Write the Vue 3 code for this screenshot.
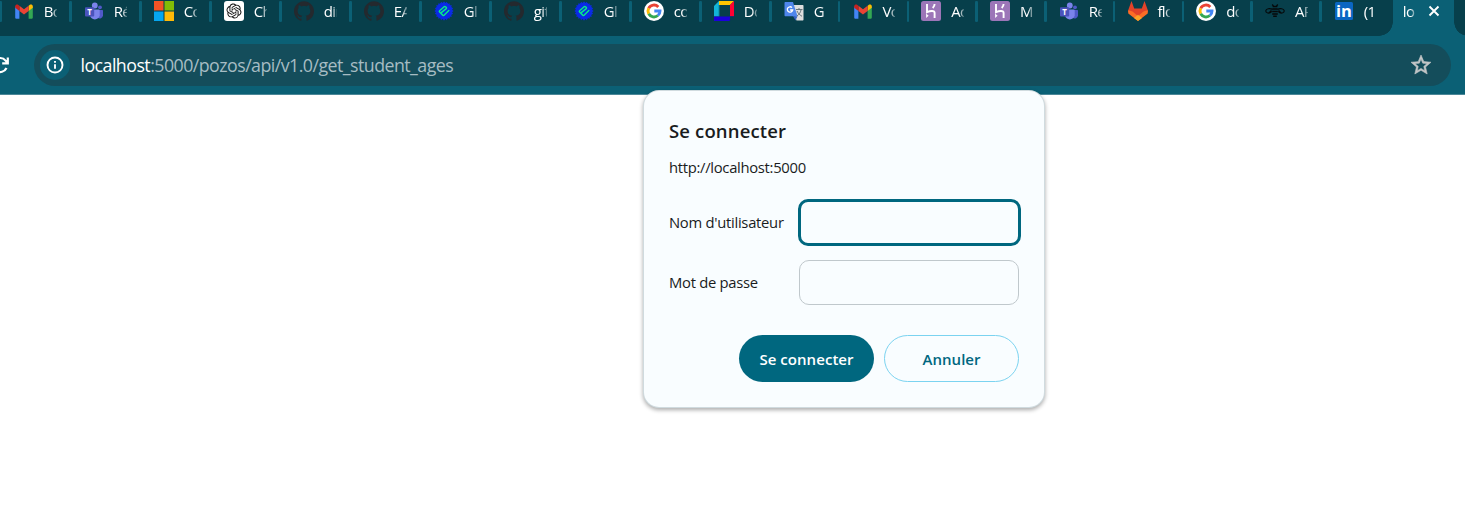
<script setup>
const tabs = [
  { icon: 'gmail', title: 'Bo' },
  { icon: 'teams', title: 'Ré' },
  { icon: 'microsoft', title: 'Co' },
  { icon: 'openai', title: 'Ch' },
  { icon: 'github', title: 'dir' },
  { icon: 'github', title: 'EA' },
  { icon: 'eazy', title: 'Gl' },
  { icon: 'github', title: 'git' },
  { icon: 'eazy', title: 'Gl' },
  { icon: 'google', title: 'co' },
  { icon: 'cube', title: 'Do' },
  { icon: 'translate', title: 'G', narrow: true },
  { icon: 'gmail', title: 'Vo', narrow: true },
  { icon: 'heroku', title: 'Ac', narrow: true },
  { icon: 'heroku', title: 'M', narrow: true },
  { icon: 'teams', title: 'Re', narrow: true },
  { icon: 'gitlab', title: 'flo', narrow: true },
  { icon: 'google', title: 'do', narrow: true },
  { icon: 'bee', title: 'AP', narrow: true },
  { icon: 'linkedin', title: '(1', narrow: true },
]
const teeth = Array.from({ length: 20 }, (_, i) => i * 18)
</script>

<template>
  <div class="window">
    <div class="strip">
      <div v-for="(tab, i) in tabs" :key="i" class="tab" :class="{ narrow: tab.narrow }">
        <svg class="icon" viewBox="0 0 20 20">
          <g v-if="tab.icon === 'gmail'">
            <path d="M1.2 5.2v11.2c0 .9.6 1.4 1.3 1.4h2.900V9z" fill="#4285f4" />
            <path d="M18.800 5.200v11.200c0 .9-.6 1.400-1.300 1.400h-2.900V9z" fill="#34a853" />
            <path d="M14.600 4.700V10l4.200-3.200V5.600c0-2-2-2.400-3.200-1.600z" fill="#fbbc04" />
            <path d="M5.400 10V4.700L10 8.200l4.600-3.500V10L10 13.500z" fill="#ea4335" />
            <path d="M1.200 5.600v1.200L5.400 10V4.700L4.400 4C3.200 3.200 1.200 3.600 1.200 5.600z" fill="#c5221f" />
          </g>
          <g v-else-if="tab.icon === 'teams'">
            <circle cx="16" cy="6.300" r="1.900" fill="#5059c9" />
            <path d="M13 9h5c.6 0 1 .4 1 1v4.200a3.200 3.200 0 0 1-5.500 2.200z" fill="#5059c9" />
            <circle cx="10.800" cy="4.500" r="2.900" fill="#7b83eb" />
            <path d="M6 8.500h8.800c.5 0 .9.400.9.900v5.200a5 5 0 0 1-9.700 0z" fill="#7b83eb" />
            <rect x="1" y="6.300" width="9.200" height="9.200" rx=".9" fill="#4b53bc" />
            <text x="5.600" y="13.800" class="mark" font-size="8" text-anchor="middle">T</text>
          </g>
          <g v-else-if="tab.icon === 'microsoft'">
            <path d="M0 0h9.500v9.500H0z" fill="#f35325" />
            <path d="M10.500 0H20v9.500h-9.500z" fill="#81bc06" />
            <path d="M0 10.500h9.500V20H0z" fill="#05a6f0" />
            <path d="M10.500 10.500H20V20h-9.500z" fill="#ffba08" />
          </g>
          <g v-else-if="tab.icon === 'openai'">
            <rect width="20" height="20" rx="3" fill="#fff" />
            <path transform="translate(2.500 2.500) scale(.625)" fill="#111" d="M22.2819 9.8211a5.9847 5.9847 0 0 0-.5157-4.9108 6.0462 6.0462 0 0 0-6.5098-2.9A6.0651 6.0651 0 0 0 4.9807 4.1818a5.9847 5.9847 0 0 0-3.9977 2.9 6.0462 6.0462 0 0 0 .7427 7.0966 5.98 5.98 0 0 0 .511 4.9107 6.051 6.051 0 0 0 6.5146 2.9001A5.9847 5.9847 0 0 0 13.2599 24a6.0557 6.0557 0 0 0 5.7718-4.2058 5.9894 5.9894 0 0 0 3.9977-2.9001 6.0557 6.0557 0 0 0-.7475-7.0729zm-9.022 12.6081a4.4755 4.4755 0 0 1-2.8764-1.0408l.1419-.0804 4.7783-2.7582a.7948.7948 0 0 0 .3927-.6813v-6.7369l2.02 1.1686a.071.071 0 0 1 .038.052v5.5826a4.504 4.504 0 0 1-4.4945 4.4944zm-9.6607-4.1254a4.4708 4.4708 0 0 1-.5346-3.0137l.142.0852 4.783 2.7582a.7712.7712 0 0 0 .7806 0l5.8428-3.3685v2.3324a.0804.0804 0 0 1-.0332.0615L9.74 19.9502a4.4992 4.4992 0 0 1-6.1408-1.6464zM2.3408 7.8956a4.485 4.485 0 0 1 2.3655-1.9728V11.6a.7664.7664 0 0 0 .3879.6765l5.8144 3.3543-2.0201 1.1685a.0757.0757 0 0 1-.071 0l-4.8303-2.7865A4.504 4.504 0 0 1 2.3408 7.872zm16.5963 3.8558L13.1038 8.364 15.1192 7.2a.0757.0757 0 0 1 .071 0l4.8303 2.7913a4.4944 4.4944 0 0 1-.6765 8.1042v-5.6772a.79.79 0 0 0-.407-.667zm2.0107-3.0231l-.142-.0852-4.7735-2.7818a.7759.7759 0 0 0-.7854 0L9.409 9.2297V6.8974a.0662.0662 0 0 1 .0284-.0615l4.8303-2.7866a4.4992 4.4992 0 0 1 6.6802 4.66zM8.3065 12.863l-2.02-1.1638a.0804.0804 0 0 1-.038-.0567V6.0742a4.4992 4.4992 0 0 1 7.3757-3.4537l-.142.0805L8.704 5.459a.7948.7948 0 0 0-.3927.6813zm1.0976-2.3654l2.602-1.4998 2.6069 1.4998v2.9994l-2.5974 1.4997-2.6067-1.4997Z" />
          </g>
          <path v-else-if="tab.icon === 'github'" transform="scale(.8333)" fill="#24292e" d="M12 .297c-6.630 0-12 5.373-12 12 0 5.303 3.438 9.800 8.205 11.385.6.113.82-.258.82-.577 0-.285-.01-1.040-.015-2.040-3.338.724-4.042-1.610-4.042-1.610C4.422 18.070 3.633 17.700 3.633 17.700c-1.087-.744.084-.729.084-.729 1.205.084 1.838 1.236 1.838 1.236 1.070 1.835 2.809 1.305 3.495.998.108-.776.417-1.305.76-1.605-2.665-.3-5.466-1.332-5.466-5.930 0-1.310.465-2.380 1.235-3.220-.135-.303-.54-1.523.105-3.176 0 0 1.005-.322 3.300 1.230.96-.267 1.980-.399 3-.405 1.020.006 2.040.138 3 .405 2.280-1.552 3.285-1.230 3.285-1.230.645 1.653.24 2.873.12 3.176.765.84 1.230 1.910 1.230 3.220 0 4.610-2.805 5.625-5.475 5.920.42.36.81 1.096.81 2.220 0 1.606-.015 2.896-.015 3.286 0 .315.21.69.825.57C20.565 22.092 24 17.592 24 12.297c0-6.627-5.373-12-12-12" />
          <g v-else-if="tab.icon === 'eazy'">
            <circle cx="10" cy="10" r="8.500" fill="#0b2be6" />
            <path v-for="a in teeth" :key="a" d="M8.700 2.500 10 .3l1.300 2.200z" fill="#0b2be6" :transform="`rotate(${a} 10 10)`" />
            <path d="M7.600 11.300 12.300 7.600c.8-.9-1.300-2.700-2.200-1.900L5.600 9.700c-.5.500-.4.900 0 1.300l3.200 3.100c.6.500 1 .4 1.500 0l4.500-4.600" fill="none" stroke="#08ea8a" stroke-width="1.500" stroke-linecap="round" stroke-linejoin="round" />
          </g>
          <g v-else-if="tab.icon === 'google'">
            <circle cx="10" cy="10" r="10" fill="#fff" />
            <g fill="none" stroke-width="2.900">
              <path d="M14.300 5.900A6 6 0 0 0 4.700 7.200" stroke="#ea4335" />
              <path d="M4.700 7.200a6 6 0 0 0 0 5.600" stroke="#fbbc05" />
              <path d="M4.700 12.800a6 6 0 0 0 9.200 1.700" stroke="#34a853" />
              <path d="M13.900 14.500A6 6 0 0 0 16 10h-5.700" stroke="#4285f4" />
            </g>
          </g>
          <g v-else-if="tab.icon === 'cube'">
            <path d="M5 0h15l-4 4H5z" fill="#ffc400" />
            <path d="M20 0v15.500h-4V4z" fill="#ff0032" />
            <path d="M5 0v15.500H0V5z" fill="#12b5d8" />
            <path d="M5 4v11.500" stroke="#0b8ba6" />
            <path d="M0 15.500h20L15.500 20H0z" fill="#1b00dc" />
            <path d="M16 15.500h4v.2L15.800 20z" fill="#073f4b" />
          </g>
          <g v-else-if="tab.icon === 'translate'">
            <path d="M8 4h10.500c.6 0 1 .4 1 1v13.500c0 .6-.4 1-1 1h-6z" fill="#dedede" />
            <path d="m9 15 4.500.3-2 4.200z" fill="#3762c4" />
            <path d="M1.500 1H9l4.500 14.300h-12c-.6 0-1-.4-1-1V2c0-.6.400-1 1-1z" fill="#4f86ec" />
            <path d="M8 6.600A2.700 2.700 0 1 0 8.700 9H6.100" fill="none" stroke="#fff" stroke-width="1.300" />
            <path d="M12 8.500h6.500M15 7v1.500M17 9c-.5 2.500-2 4.500-4 6M13 10c1 2.200 2.500 3.800 5 5.300" fill="none" stroke="#68757c" />
          </g>
          <g v-else-if="tab.icon === 'heroku'">
            <rect width="20" height="20" rx="2.500" fill="#9c76b8" />
            <path d="M6 3v8.200c3-1.300 7.600-2.200 7.600.6V17M13.600 3c0 1.500-.7 2.800-1.900 4" fill="none" stroke="#fff" stroke-width="1.900" />
            <path d="m5.100 12.500 2.500 2.300-2.500 2.300z" fill="#fff" />
          </g>
          <g v-else-if="tab.icon === 'gitlab'">
            <path d="M0 9.700 3.500 0l2.700 7.500h7.600L16.500 0 20 9.700 10 15z" fill="#e24329" />
            <path d="M0 9.700c2.500-.4 4.500.8 6 2L10 15l4-3.300c1.500-1.200 3.500-2.400 6-2l-.3 2.800L10 20 .3 12.500z" fill="#fc6d26" />
            <path d="m6 17 4-3.200 4 3.200-4 3z" fill="#fca326" />
          </g>
          <g v-else-if="tab.icon === 'bee'" fill="none" stroke="#06090a" stroke-width="1.200">
            <path d="M7.500 8.600C5 6.700 1 7.800.8 9.800c-.2 2 3.500 3.700 6 .5M3.400 12.400l3-3M12.500 8.600c2.500-1.900 6.500-.8 6.700 1.200.2 2-3.500 3.700-6 .5M16.600 12.400l-3-3" />
            <path d="M7.700 5.500h4.600M7.300 8h5.400M7.200 10.500h5.600M7.200 13h5.600M8.200 15.300h3.600" stroke-width="1.400" />
            <path d="M8.500 5 7.200 3.500M11.500 5l1.300-1.500" />
          </g>
          <g v-else>
            <rect x="1" y="1" width="18" height="18" rx="1.500" fill="#0a66c2" />
            <text x="10" y="16.200" class="mark" font-size="16.500" text-anchor="middle">in</text>
          </g>
        </svg>
        <span class="title">{{ tab.title }}</span>
      </div>
      <div class="tab active">
        <span class="title">lo</span>
        <svg class="close" viewBox="0 0 12 12"><path d="m1.500 1.500 9 9m0-9-9 9" /></svg>
      </div>
      <div class="tail"></div>
    </div>

    <div class="toolbar">
      <svg class="reload" viewBox="0 0 20 20"><path d="M16.500 13A7 7 0 1 1 15.600 5.600L17.600 8M17.800 2.500v5.800h-5.600" /></svg>
      <div class="address">
        <span class="info">
          <svg viewBox="0 0 18 18"><circle cx="9" cy="9" r="7.500" /><path d="M9 8.200v4.600M9 5v1.800" /></svg>
        </span>
        <span class="url"><b>localhost</b>:5000/pozos/api/v1.0/get_student_ages</span>
        <svg class="star" viewBox="0 0 24 24"><path d="m22 9.240-7.190-.62L12 2 9.190 8.630 2 9.240l5.460 4.730L5.820 21 12 17.270 18.180 21l-1.630-7.030L22 9.240zM12 15.400l-3.760 2.270 1-4.280-3.320-2.880 4.380-.38L12 6.100l1.710 4.040 4.380.38-3.320 2.880 1 4.280L12 15.400z" /></svg>
      </div>
    </div>

    <form class="dialog" @submit.prevent>
      <h1>Se connecter</h1>
      <p>http://localhost:5000</p>
      <div class="field">
        <label for="user">Nom d'utilisateur</label>
        <input id="user" class="focused" type="text" />
      </div>
      <div class="field">
        <label for="pass">Mot de passe</label>
        <input id="pass" type="password" />
      </div>
      <div class="actions">
        <button class="primary">Se connecter</button>
        <button type="button">Annuler</button>
      </div>
    </form>
  </div>
</template>

<style>
body { background: #fff; overflow: hidden; }
</style>

<style scoped>
.window {
  position: relative;
  width: 1465px;
  height: 517px;
  overflow: hidden;
  background: #fff;
  font-family: "Open Sans", "Noto Sans", sans-serif;
}
.strip {
  display: flex;
  height: 36px;
  padding-left: .4px;
  background: #073f4b;
  overflow: hidden;
}
.tab {
  position: relative;
  display: flex;
  flex: none;
  box-sizing: border-box;
  width: 70px;
  height: 36px;
  padding: 1px 0 0 13.6px;
}
.tab.narrow { width: 68.75px; }
.tab::before {
  content: "";
  position: absolute;
  left: -1.4px;
  top: 1px;
  width: 2.6px;
  height: 21px;
  border-radius: 1.3px;
  background: #0b6075;
}
.icon { flex: none; width: 20px; height: 20px; }
.mark { fill: #fff; font-family: "Open Sans", sans-serif; font-weight: 700; }
.title {
  width: 13px;
  margin-left: 9.700px;
  overflow: hidden;
  white-space: nowrap;
  color: #fff;
  font-size: 15px;
  letter-spacing: -.6px;
  line-height: 21px;
  -webkit-mask-image: linear-gradient(90deg, #000 62%, #0004);
  mask-image: linear-gradient(90deg, #000 62%, #0004);
}
.tab.active {
  width: 61px;
  margin-left: 3.600px;
  padding-left: 10px;
  background: #0b6075;
}
.tab.active::before {
  left: -14px;
  top: 22px;
  width: 14px;
  height: 14px;
  border-radius: 0;
  background: radial-gradient(circle at 0 0, transparent 13.500px, #0b6075 14px);
}
.tab.active .title { width: 12.500px; margin-left: 0; }
.close { width: 12px; height: 12px; margin: 4px 0 0 13px; }
.close path { stroke: #fff; stroke-width: 1.900; }
.tail { position: relative; flex: 1; }
.tail::before {
  content: "";
  position: absolute;
  left: 0;
  bottom: 0;
  width: 14px;
  height: 14px;
  background: radial-gradient(circle at 14px 0, transparent 13.500px, #0b6075 14px);
}
.toolbar {
  display: flex;
  box-sizing: border-box;
  height: 59px;
  padding: 8px 14px 0 0;
  border-bottom: 1px solid #4b8798;
  background: #0b6075;
}
.reload { flex: none; width: 20px; height: 20px; margin: 11px 24px 0 -10px; fill: none; stroke: #fff; stroke-width: 2.200; }
.address {
  display: flex;
  flex: 1;
  align-items: center;
  height: 42px;
  border-radius: 21px;
  background: #144d5b;
}
.info {
  display: flex;
  align-items: center;
  justify-content: center;
  width: 30px;
  height: 30px;
  margin-left: 6px;
  border-radius: 50%;
  background: #0b6075;
}
.info svg { width: 18px; height: 18px; fill: none; stroke: #fff; stroke-width: 1.900; }
.url { flex: 1; margin-left: 10.500px; color: #a6bcc3; font-size: 17.800px; line-height: 42px; letter-spacing: -.54px; }
.url b { color: #fff; font-weight: 400; }
.star { width: 24px; height: 24px; margin-right: 18px; fill: #c3c6c7; stroke: #c3c6c7; stroke-width: .6; }
.dialog {
  position: absolute;
  left: 644px;
  top: 90.500px;
  box-sizing: border-box;
  width: 400px;
  height: 316.500px;
  padding: 26.500px 25px 0;
  border-radius: 15px;
  background: #f9fdff;
  box-shadow: 0 0 0 1px #d0dbdf, 0 2px 4px 1px #0005;
  color: #191c1d;
}
h1 { margin: 0; font-size: 18.500px; font-weight: 600; line-height: 28px; letter-spacing: .15px; }
p { margin: 9px 0 20px; font-size: 14.800px; line-height: 26px; letter-spacing: -.3px; }
.field { display: flex; align-items: center; justify-content: space-between; height: 45px; margin-bottom: 15px; }
label { margin-top: -2px; font-size: 14.800px; letter-spacing: -.28px; white-space: nowrap; }
input {
  box-sizing: border-box;
  width: 220px;
  height: 45px;
  border: 1.500px solid #c0c8cc;
  border-radius: 10px;
  outline: none;
  background: transparent;
}
input.focused { width: 222.500px; height: 47.500px; margin-right: -1.500px; border: 3px solid #00677f; }
.actions { display: flex; justify-content: flex-end; gap: 10px; margin-top: 30px; }
button {
  box-sizing: border-box;
  width: 135px;
  height: 47px;
  padding: 0;
  border: 1.500px solid #7bd3f0;
  border-radius: 24px;
  background: transparent;
  color: #00677f;
  font: 600 15px "Open Sans", sans-serif;
  letter-spacing: .05px;
}
.primary { border: 0; background: #00677f; color: #fff; }
</style>
